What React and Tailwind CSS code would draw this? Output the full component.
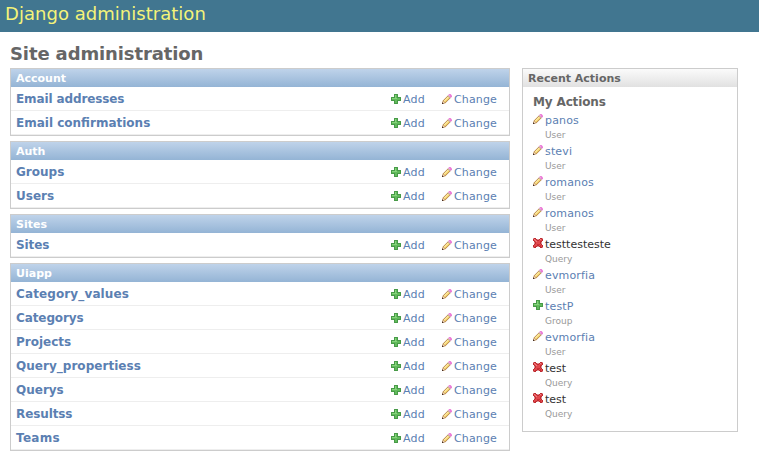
const apps = [
  ["Account", [["Email addresses", "tracking-[-0.12px]"], ["Email confirmations", ""]]],
  ["Auth", [["Groups", ""], ["Users", ""]]],
  ["Sites", [["Sites", "tracking-[-0.1px]"]]],
  ["Uiapp", [
    ["Category_values", "tracking-[0.12px]"],
    ["Categorys", "tracking-[-0.1px]"],
    ["Projects", ""],
    ["Query_propertiess", "tracking-[0.03px]"],
    ["Querys", ""],
    ["Resultss", "tracking-[-0.1px]"],
    ["Teams", "tracking-[0.3px]"],
  ]],
];

const actions = [
  ["change", "panos", "User"],
  ["change", "stevi", "User"],
  ["change", "romanos", "User"],
  ["change", "romanos", "User"],
  ["delete", "testtesteste", "Query"],
  ["change", "evmorfia", "User"],
  ["add", "testP", "Group"],
  ["change", "evmorfia", "User"],
  ["delete", "test", "Query"],
  ["delete", "test", "Query"],
];

function AddIcon() {
  return (
    <svg className="size-[10px] shrink-0" viewBox="0 0 10 10">
      <path fill="#479a47" d="M3.2 0h3.6l.2.2V3h2.8l.2.2v3.6l-.2.2H7v2.8l-.2.2H3.2L3 9.8V7H.2L0 6.8V3.2L.2 3H3V.2z" />
      <path fill="#62ba5c" d="M4 1h2v3h3v2H6v3H4V6H1V4h3z" />
      <path fill="#86d47b" d="M4 1h1v3H4zM1 4h5v1H1z" />
    </svg>
  );
}

function ChangeIcon() {
  return (
    <svg className="size-[10px] shrink-0" viewBox="0 0 10 10">
      <path fill="#b98443" d="M6.2 1.2 8.8 3.8 3.3 9.3 0 10 .7 6.7z" />
      <path fill="#fbdf78" d="M6.1 2.5 7.5 3.9 3.1 8.3 1.7 6.9z" />
      <path fill="#fff3bb" d="M6.1 2.5 6.6 3 2.2 7.4 1.7 6.9z" />
      <path fill="#f7e3cf" d="M1.3 7.2 2.8 8.7 1 9.2z" />
      <path fill="#2b1715" d="M.3 8.3 1.7 9.7 0 10z" />
      <path fill="#c9b7c4" d="M6.2 1.2 8.8 3.8 8.2 4.4 5.6 1.8z" />
      <path fill="#ea7ad6" d="M7.3 0h1.2L10 1.5v1.2L8.9 3.8 6.2 1.1z" />
      <path fill="#f4a0e5" d="M7.6.8 8.3 1.5 7.5 2.3 6.8 1.6z" />
    </svg>
  );
}

function DeleteIcon() {
  return (
    <svg className="size-[10px] shrink-0" viewBox="0 0 10 10" shapeRendering="crispEdges">
      <path fill="#bd2b30" d="M1 0h2v1h1v1h2V1h1V0h2v1h1v2H9v1H8v2h1v1h1v2H9v1H7V9H6V8H4v1H3v1H1V9H0V7h1V6h1V4H1V3H0V1h1z" />
      <path fill="#e0484d" d="M1 1h2v1h1v1h2V2h1V1h2v2H8v1H7v2h1v1h1v2H7V8H6V7H4v1H3v1H1V7h1V6h1V4H2V3H1z" />
      <path fill="#cc3035" d="M4 6h3v1H4zM7 7h1v2H7zM2 8h1v1H2zM7 3h1v1H7z" />
      <path fill="#ef8083" d="M1 1h1v1H1zM2 2h1v1H2zM3 3h1v1H3zM7 1h1v1H7z" />
      <path fill="#dc9295" d="M0 0h1v1H0zM9 0h1v1H9zM0 9h1v1H0zM9 9h1v1H9zM4 1h2v1H4zM4 8h2v1H4zM1 4h1v2H1zM8 4h1v2H8z" />
    </svg>
  );
}

const icons = { add: AddIcon, change: ChangeIcon, delete: DeleteIcon };

function Module({ name, models }) {
  return (
    <section className="border border-[#ccc]">
      <h2 className="h-[18px] bg-linear-to-b from-[#bfd3ea] to-[#94b4d5] pl-[5px] text-[11px] leading-[19px] font-bold text-white">{name}</h2>
      {models.map(([m, tracking]) => (
        <div key={m} className="flex h-6 items-center border-b border-[#eee] pl-[5px] text-[#5b80b2]">
          <a className={`w-[375px] pt-px text-[12px] leading-[23px] font-bold ${tracking}`}>{m}</a>
          <a className="flex w-[51px] items-center gap-[2px] text-[11px] leading-[23px] tracking-[0.2px]"><AddIcon /><span className="pt-px">Add</span></a>
          <a className="flex items-center gap-[2px] text-[11px] leading-[23px] tracking-[0.15px]"><ChangeIcon /><span className="pt-px">Change</span></a>
        </div>
      ))}
    </section>
  );
}

export default function App() {
  return (
    <div className="h-[467px] overflow-hidden bg-white font-['DejaVu_Sans',Verdana,sans-serif] text-[#666]">
      <header className="h-8 bg-[#417690] pl-[5px] text-[18px] leading-[28px] tracking-[0.03px] text-[#f4f379]">Django administration</header>
      <h1 className="h-9 pt-[10px] pl-[10px] text-[18px] leading-6 font-bold tracking-[-0.12px]">Site administration</h1>
      <div className="flex items-start gap-3 pl-[10px]">
        <main className="flex w-[500px] flex-col gap-[5px]">
          {apps.map(([name, models]) => <Module key={name} name={name} models={models} />)}
        </main>
        <aside className="h-[364px] w-[216px] border border-[#ccc]">
          <h2 className="h-[18px] bg-linear-to-b from-[#fbfbfb] to-[#e1e1e1] pl-[5px] text-[11px] leading-[19px] font-bold">Recent Actions</h2>
          <h3 className="mt-[7px] pl-[10px] text-[12px] leading-4 font-bold tracking-[-0.15px]">My Actions</h3>
          <ul className="mt-[2px] pl-[10px]">
            {actions.map(([kind, name, type], i) => {
              const Icon = icons[kind];
              return (
                <li key={i} className="flex h-[31px] gap-[2px]">
                  <span className="pt-[2px]"><Icon /></span>
                  <div className="pt-px">
                    <div className={kind === "delete" ? "text-[11px] leading-4 text-[#333]" : "text-[11px] leading-4 tracking-[0.15px] text-[#5b80b2]"}>{name}</div>
                    <div className="text-[9px] leading-[13px] text-[#999]">{type}</div>
                  </div>
                </li>
              );
            })}
          </ul>
        </aside>
      </div>
    </div>
  );
}
